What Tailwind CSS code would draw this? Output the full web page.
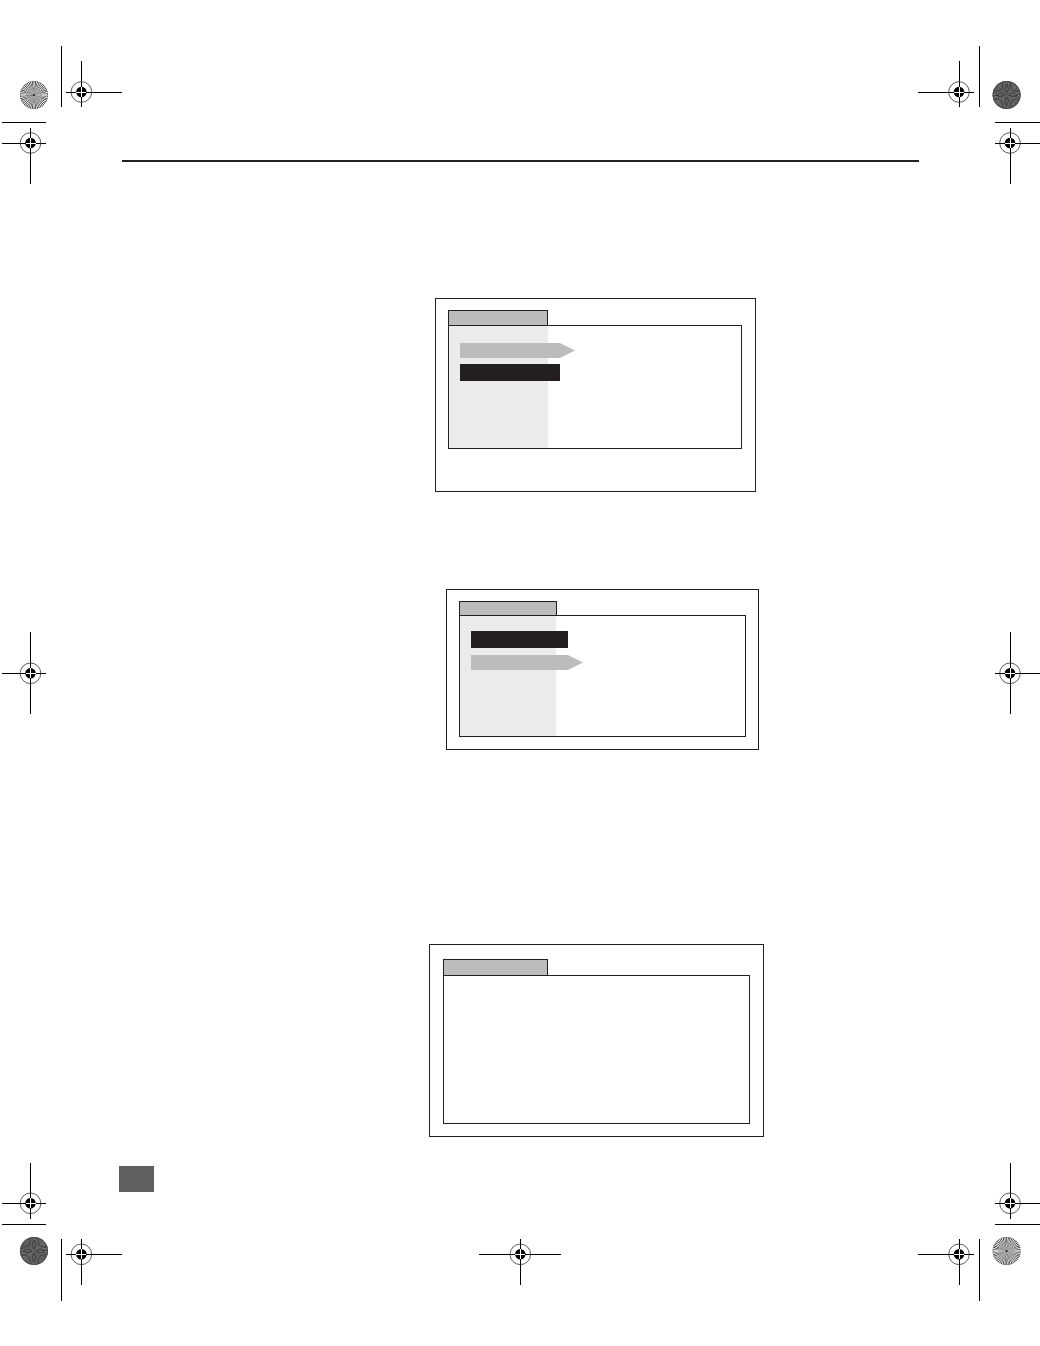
<!DOCTYPE html>
<html lang="en">
  <head>
    <meta charset="UTF-8" />
    <meta name="viewport" content="width=device-width, initial-scale=1.0" />
    <title>Proof sheet</title>
    <script src="https://cdn.jsdelivr.net/npm/@tailwindcss/browser@4"></script>
  </head>
  <body class="bg-white font-['Liberation_Sans',sans-serif]">
    <!-- Shared printer's marks -->
    <svg class="hidden" aria-hidden="true">
      <defs>
        <g id="target">
          <circle r="10.3" fill="none" stroke="#333" stroke-width="0.8" />
          <circle r="5.3" fill="#000" />
          <path d="M-5 0.2H5M0.2 -5V5" stroke="#fff" stroke-width="1" shape-rendering="crispEdges" />
        </g>
        <g id="star-light">
          <circle r="14" fill="#fff" />
          <circle r="7" fill="none" stroke="#000" stroke-width="14" pathLength="480" stroke-dasharray="4 6" stroke-dashoffset="2" />
          <circle r="13.7" fill="none" stroke="#666" stroke-width="0.5" />
          <circle r="1" fill="#111" />
        </g>
        <g id="star-dark">
          <circle r="14" fill="#2e2e2e" />
          <circle r="7" fill="none" stroke="#999" stroke-width="14" pathLength="192" stroke-dasharray="1 1" />
          <path d="M0 -11L2 -6L0 -2L-2 -6ZM0 11L2 6L0 2L-2 6ZM-11 0L-6 -2L-2 0L-6 2ZM11 0L6 -2L2 0L6 2Z" fill="none" stroke="#333" stroke-width="0.8" />
          <path d="M-4 -12Q-3 -3 -12 -4M4 -12Q3 -3 12 -4M-4 12Q-3 3 -12 4M4 12Q3 3 12 4" fill="none" stroke="#333" stroke-width="0.8" />
          <circle r="13.5" fill="none" stroke="#444" stroke-width="0.9" />
        </g>
      </defs>
    </svg>

    <div class="grid min-h-screen grid-cols-[122px_1fr_122px]">
      <!-- Left margin -->
      <aside class="flex flex-col justify-between pt-[46px] pb-[45px]" aria-hidden="true">
        <svg class="h-[138px] w-[122px]" viewBox="0 0 122 138">
          <path d="M61.5 0V61M81.5 15V61M66 46.5H122M2 76.5H46M30.5 82V138M2 97.5H46" stroke="#000" shape-rendering="crispEdges" />
          <use href="#target" x="81.4" y="46" />
          <use href="#target" x="30.5" y="97" />
          <use href="#star-light" x="34" y="49" />
        </svg>
        <svg class="mb-0.5 h-[82px] w-[122px]" viewBox="0 0 122 82">
          <path d="M30.5 0V82M2 41.5H46" stroke="#000" shape-rendering="crispEdges" />
          <use href="#target" x="30.5" y="41.3" />
        </svg>
        <svg class="h-[138px] w-[122px]" viewBox="0 0 122 138">
          <path d="M30.5 0V56M2 40.5H46M2 61.5H46M61.5 76V138M81.5 76V122M66 91.5H122" stroke="#000" shape-rendering="crispEdges" />
          <use href="#target" x="30.5" y="40.3" />
          <use href="#target" x="81.4" y="91.3" />
          <use href="#star-dark" x="34" y="88" />
        </svg>
      </aside>

      <!-- Page -->
      <main class="flex flex-col items-start pt-[160px] pb-[61px]">
        <hr class="-mr-px h-[2px] self-stretch border-0 bg-[#231f20]" />

        <figure class="mt-[136px] ml-[313px] w-[321px] border border-[#231f20] px-3 pt-[11px] pb-[42px]">
          <div class="h-[15px] w-[100px] border border-b-0 border-[#231f20] bg-[#bcbcbc]"></div>
          <div class="mr-px h-[124px] border border-[#231f20]">
            <div class="flex h-full w-[99px] flex-col gap-1.5 bg-[#ebebeb] pt-[17px] pl-[11px]">
              <div class="h-[15px] w-[115px] bg-[#bcbcbc] [clip-path:polygon(0_0,calc(100%-15px)_0,100%_50%,calc(100%-15px)_100%,0_100%)]"></div>
              <div class="h-[17px] w-[100px] bg-[#231f20]"></div>
            </div>
          </div>
        </figure>

        <figure class="mt-[97px] ml-[324px] w-[313px] border border-[#231f20] px-3 pt-[11px] pb-3">
          <div class="h-[14px] w-[98px] border border-b-0 border-[#231f20] bg-[#bcbcbc]"></div>
          <div class="h-[122px] border border-[#231f20]">
            <div class="flex h-full w-[96px] flex-col gap-[7px] bg-[#ebebeb] pt-[15px] pl-[11px]">
              <div class="h-[17px] w-[97px] bg-[#231f20]"></div>
              <div class="h-[15px] w-[112px] bg-[#bcbcbc] [clip-path:polygon(0_0,calc(100%-15px)_0,100%_50%,calc(100%-15px)_100%,0_100%)]"></div>
            </div>
          </div>
        </figure>

        <figure class="mt-[194px] ml-[307px] w-[335px] border border-[#231f20] px-[13px] pt-[14px] pb-3">
          <div class="h-4 w-[105px] border border-b-0 border-[#231f20] bg-[#bcbcbc]"></div>
          <div class="h-[149px] border border-[#231f20]"></div>
        </figure>

        <div class="mt-[29px] -ml-[3px] h-[26px] w-[35px] bg-[#606060]"></div>

        <svg class="mt-[47px] h-[46px] w-[82px] self-center" viewBox="0 0 82 46" aria-hidden="true">
          <path d="M0 15.5H82M41.5 0V46" stroke="#000" shape-rendering="crispEdges" />
          <use href="#target" x="41.3" y="15.3" />
        </svg>
      </main>

      <!-- Right margin -->
      <aside class="flex flex-col justify-between pt-[46px] pb-[45px]" aria-hidden="true">
        <svg class="h-[138px] w-[122px]" viewBox="0 0 122 138">
          <path d="M61.5 0V61M41.5 15V61M0 46.5H56M77 76.5H122M92.5 82V138M77 97.5H122" stroke="#000" shape-rendering="crispEdges" />
          <use href="#target" x="41" y="46" />
          <use href="#target" x="92" y="97" />
          <use href="#star-dark" x="88.6" y="49" />
        </svg>
        <svg class="mb-0.5 h-[82px] w-[122px]" viewBox="0 0 122 82">
          <path d="M92.5 0V82M77 41.5H122" stroke="#000" shape-rendering="crispEdges" />
          <use href="#target" x="92" y="41.3" />
        </svg>
        <svg class="h-[138px] w-[122px]" viewBox="0 0 122 138">
          <path d="M92.5 0V56M77 40.5H122M77 61.5H122M61.5 76V138M41.5 76V122M0 91.5H56" stroke="#000" shape-rendering="crispEdges" />
          <use href="#target" x="92" y="40.3" />
          <use href="#target" x="41" y="91.3" />
          <use href="#star-light" x="88.6" y="88" />
        </svg>
      </aside>
    </div>
  </body>
</html>
